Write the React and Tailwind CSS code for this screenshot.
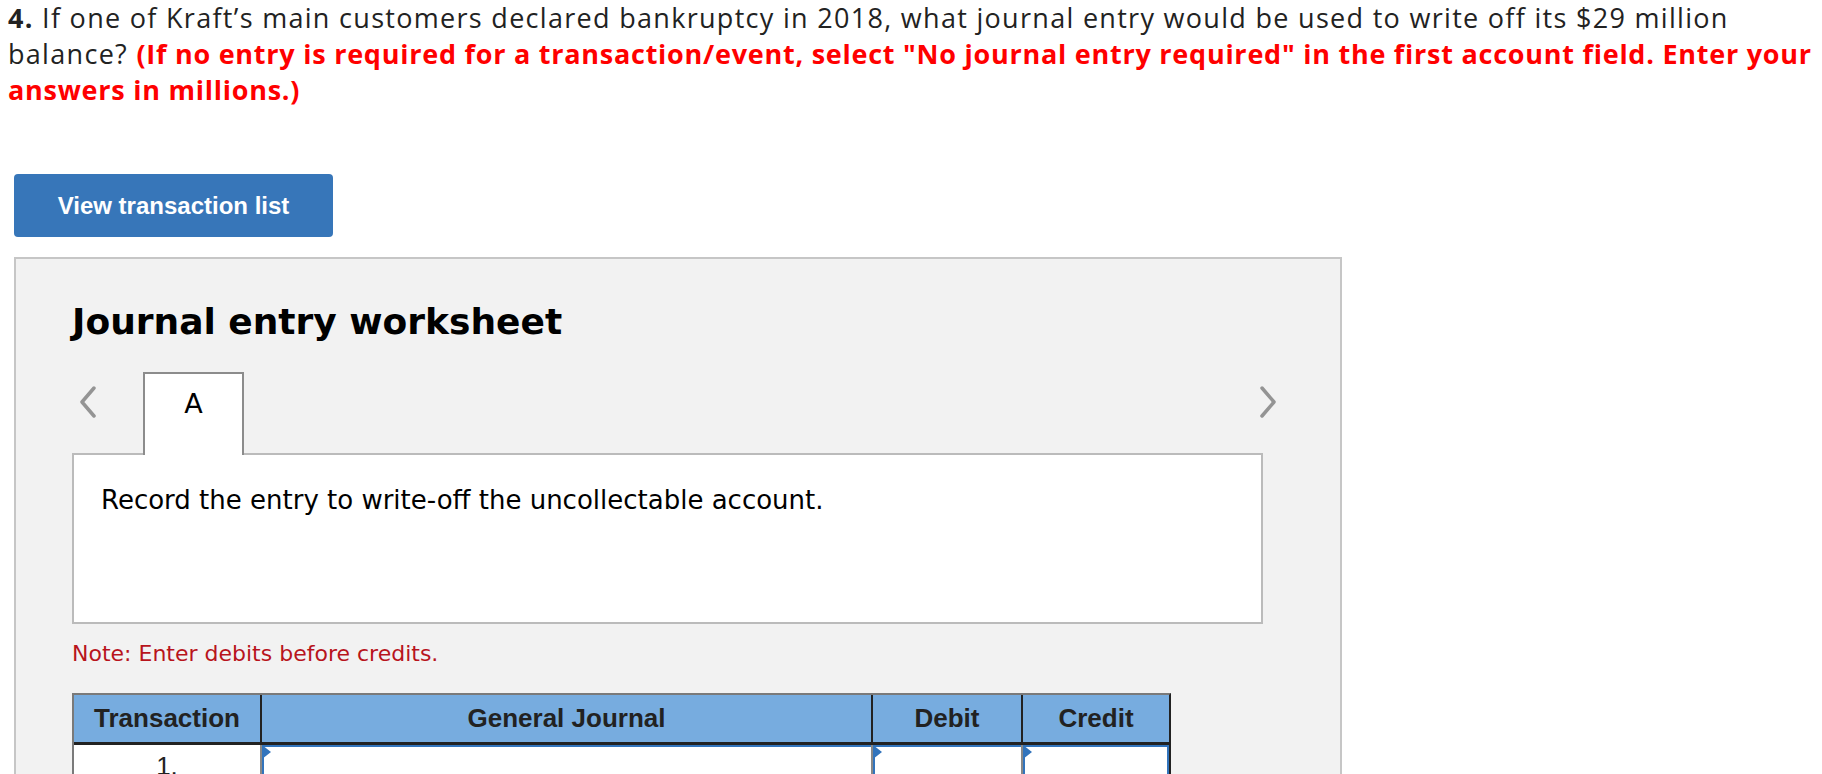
import React from 'react';

const Chevron = ({ dir }) => (
  <svg width="20" height="32" viewBox="0 0 20 32" className="block">
    {dir === 'left' ? (
      <polyline points="16,2 4,16 16,30" fill="none" stroke="#949494" strokeWidth="3.5" strokeLinecap="round" strokeLinejoin="round" />
    ) : (
      <polyline points="4,2 16,16 4,30" fill="none" stroke="#949494" strokeWidth="3.5" strokeLinecap="round" strokeLinejoin="round" />
    )}
  </svg>
);

const Flag = () => (
  <div className="absolute left-0 top-0 w-0 h-0 border-t-[7px] border-b-[7px] border-l-[9px] border-t-transparent border-b-transparent border-l-[#3274bc]" />
);

export default function App() {
  return (
    <div className="min-h-[774px] bg-white text-[#222]">
      {/* Question */}
      <div className="px-2 text-[27px] leading-[36px] tracking-[1.3px] font-['Open_Sans',sans-serif] whitespace-nowrap">
        <b>4.</b> If one of Kraft’s main customers declared bankruptcy in 2018, what journal entry would be used to write off its $29 million
        <br />
        balance? <span className="font-bold tracking-[0.75px] text-[#ff0000]">(If no entry is required for a transaction/event, select "No journal entry required" in the first account field. Enter your</span>
        <br />
        <span className="font-bold tracking-[0.75px] text-[#ff0000]">answers in millions.)</span>
      </div>

      {/* Button */}
      <button className="ml-[14px] mt-[66px] w-[319px] h-[63px] rounded-[4px] bg-[#3776b9] text-white font-bold text-[24px] font-['Liberation_Sans',Arial,sans-serif]">
        View transaction list
      </button>

      {/* Worksheet panel */}
      <div className="ml-[14px] mt-[20px] w-[1328px] min-h-[600px] border-2 border-[#c6c6c6] bg-[#f2f2f2] pl-[56px] pt-[39px] font-['DejaVu_Sans',Verdana,sans-serif]">
        <h2 className="text-[36px] leading-[48px] font-bold text-black">Journal entry worksheet</h2>

        {/* Tabs */}
        <div className="mt-[26px] flex items-start w-[1206px]">
          <div className="w-[71px] pt-[14px] pl-[6px]">
            <Chevron dir="left" />
          </div>
          <div className="relative z-10 -mb-[2px] w-[101px] h-[83px] border-2 border-b-0 border-[#8c8c8c] bg-white flex justify-center pt-[14px] text-[27px] leading-[32px] text-black">
            A
          </div>
          <div className="flex-1" />
          <div className="pt-[14px]">
            <Chevron dir="right" />
          </div>
        </div>

        {/* Instruction box */}
        <div className="w-[1191px] h-[171px] border-2 border-[#bbb] bg-white pl-[27px] pt-[29px] text-[26px] leading-[32px] text-black">
          Record the entry to write-off the uncollectable account.
        </div>

        <p className="mt-[16px] text-[22px] leading-[28px] text-[#b8141c]">Note: Enter debits before credits.</p>

        {/* Journal table */}
        <div className="mt-[25px] w-[1099px] border-l-2 border-t-2 border-r-2 border-l-[#7a7a7a] border-t-[#7a7a7a] border-r-[#222] font-['Liberation_Sans',Arial,sans-serif]">
          <div className="grid grid-cols-[186px_611px_150px_148px] h-[50px] bg-[#77acdf] border-b-[3px] border-[#222] text-[26px] font-bold text-[#222]">
            <div className="flex items-center justify-center">Transaction</div>
            <div className="flex items-center justify-center border-l-2 border-[#222]">General Journal</div>
            <div className="flex items-center justify-center border-l-2 border-[#222]">Debit</div>
            <div className="flex items-center justify-center border-l-2 border-[#222]">Credit</div>
          </div>
          <div className="grid grid-cols-[186px_611px_150px_148px] h-[60px] bg-white">
            <div className="flex justify-center pt-[6px] text-[26px] leading-[30px] text-[#222]">1.</div>
            <div className="relative border-l-2 border-[#888]">
              <div className="absolute inset-0 border-l-2 border-t-2 border-[#3274bc]" />
              <Flag />
            </div>
            <div className="relative border-l-2 border-[#888]">
              <div className="absolute inset-0 border-l-2 border-t-2 border-[#3274bc]" />
              <Flag />
            </div>
            <div className="relative border-l-2 border-[#888]">
              <div className="absolute inset-0 border-l-2 border-t-2 border-r-2 border-[#3274bc]" />
              <Flag />
            </div>
          </div>
        </div>
      </div>
    </div>
  );
}
